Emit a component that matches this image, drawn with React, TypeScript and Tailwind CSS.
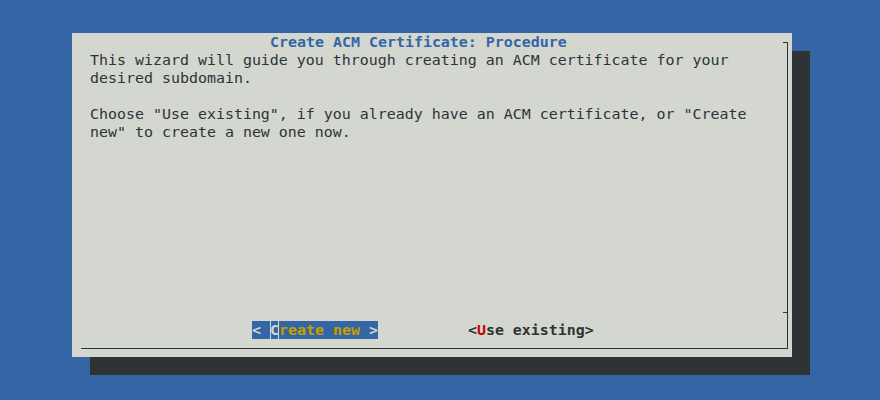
export default function App() {
  return (
    <main className="w-[880px] h-[400px] bg-[#3465a4] pt-[33px] pl-[72px] font-['DejaVu_Sans_Mono',monospace] text-[14.95px] leading-[18px] overflow-hidden">
      {/* Dialog box */}
      <div className="relative w-[720px] h-[324px] bg-[#d3d7cf] shadow-[18px_18px_0_0_#2e3436] flex flex-col pb-[18px] text-[#2e3436]">
        {/* dark frame (right + bottom edges) */}
        <div className="absolute left-[9px] top-[9px] w-[707px] h-[307px] border-r border-b border-[#2e3436]" />
        <div className="absolute left-[711px] top-[9px] w-[5px] h-px bg-[#2e3436]" />
        <div className="absolute left-[711px] top-[279px] w-[5px] h-px bg-[#2e3436]" />

        {/* Title */}
        <div className="h-[18px] pl-[198px] font-bold text-[#3465a4] whitespace-pre">
          Create ACM Certificate: Procedure
        </div>

        {/* Body */}
        <div className="pl-[18px] whitespace-pre">
          <div>This wizard will guide you through creating an ACM certificate for your</div>
          <div>desired subdomain.</div>
          <div> </div>
          <div>Choose "Use existing", if you already have an ACM certificate, or "Create</div>
          <div>new" to create a new one now.</div>
        </div>

        {/* Buttons */}
        <div className="mt-auto h-[18px] pl-[180px] flex font-bold whitespace-pre">
          <span className="bg-[#3465a4] text-[#d3d7cf]">
            {"< "}
            <span className="shadow-[inset_1px_0_0_#d3d7cf,inset_-1px_0_0_#d3d7cf]">C</span>
            <span className="text-[#c4a000]">reate new</span>
            {" >"}
          </span>
          <span>{"          "}</span>
          <span>
            {"<"}
            <span className="text-[#cc0000]">U</span>
            {"se existing>"}
          </span>
        </div>
      </div>
    </main>
  );
}
